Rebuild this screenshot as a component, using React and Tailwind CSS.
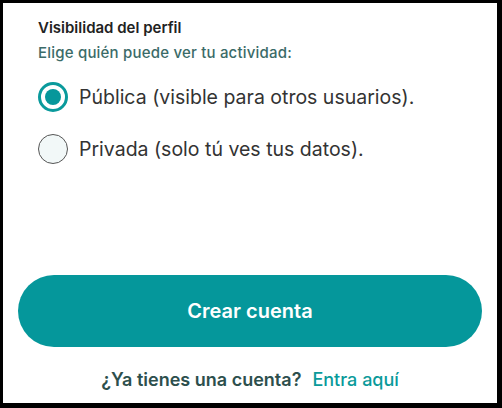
export default function App() {
  const font = { fontFamily: 'Inter, "Noto Sans", sans-serif' };
  return (
    <div
      className="w-[502px] h-[408px] bg-black pt-[3px] pl-[3px] pr-[5px] pb-[5px] box-border"
      style={font}
    >
      <div className="w-full h-full bg-white flex flex-col">
        <div className="pl-[35px] pt-[16px]">
          <div className="text-[15px] font-semibold text-[#222222] leading-[18px]">
            Visibilidad del perfil
          </div>
          <div className="mt-[7px] text-[15px] font-medium text-[#3b6b68] leading-[18px] tracking-[0.2px]">
            Elige quién puede ver tu actividad:
          </div>
        </div>
        <div className="pl-[35px] mt-[20px] flex flex-col gap-[22px]">
          <label className="flex items-center gap-[11px]">
            <span className="w-[30px] h-[30px] rounded-full border-[3px] border-[#0a9a9c] flex items-center justify-center bg-white">
              <span className="w-[16px] h-[16px] rounded-full bg-[#06979b]" />
            </span>
            <span className="text-[19.5px] text-[#333333] leading-[28px]">
              Pública (visible para otros usuarios).
            </span>
          </label>
          <label className="flex items-center gap-[11px]">
            <span className="w-[30px] h-[30px] rounded-full border-[1.5px] border-[#555555] bg-[#f2f8f8]" />
            <span className="text-[19.5px] text-[#333333] leading-[28px]">
              Privada (solo tú ves tus datos).
            </span>
          </label>
        </div>
        <div className="flex-1" />
        <div className="px-[15px]">
          <button className="w-full h-[72px] rounded-full bg-[#05979b] text-white text-[20px] font-semibold">
            Crear cuenta
          </button>
        </div>
        <div className="mt-[21px] mb-[11px] text-center text-[18px] leading-[24px]">
          <span className="font-semibold text-[#2d4f4d]">¿Ya tienes una cuenta?</span>
          <span className="ml-[11px] font-medium text-[#0a9a9a]">Entra aquí</span>
        </div>
      </div>
    </div>
  );
}
